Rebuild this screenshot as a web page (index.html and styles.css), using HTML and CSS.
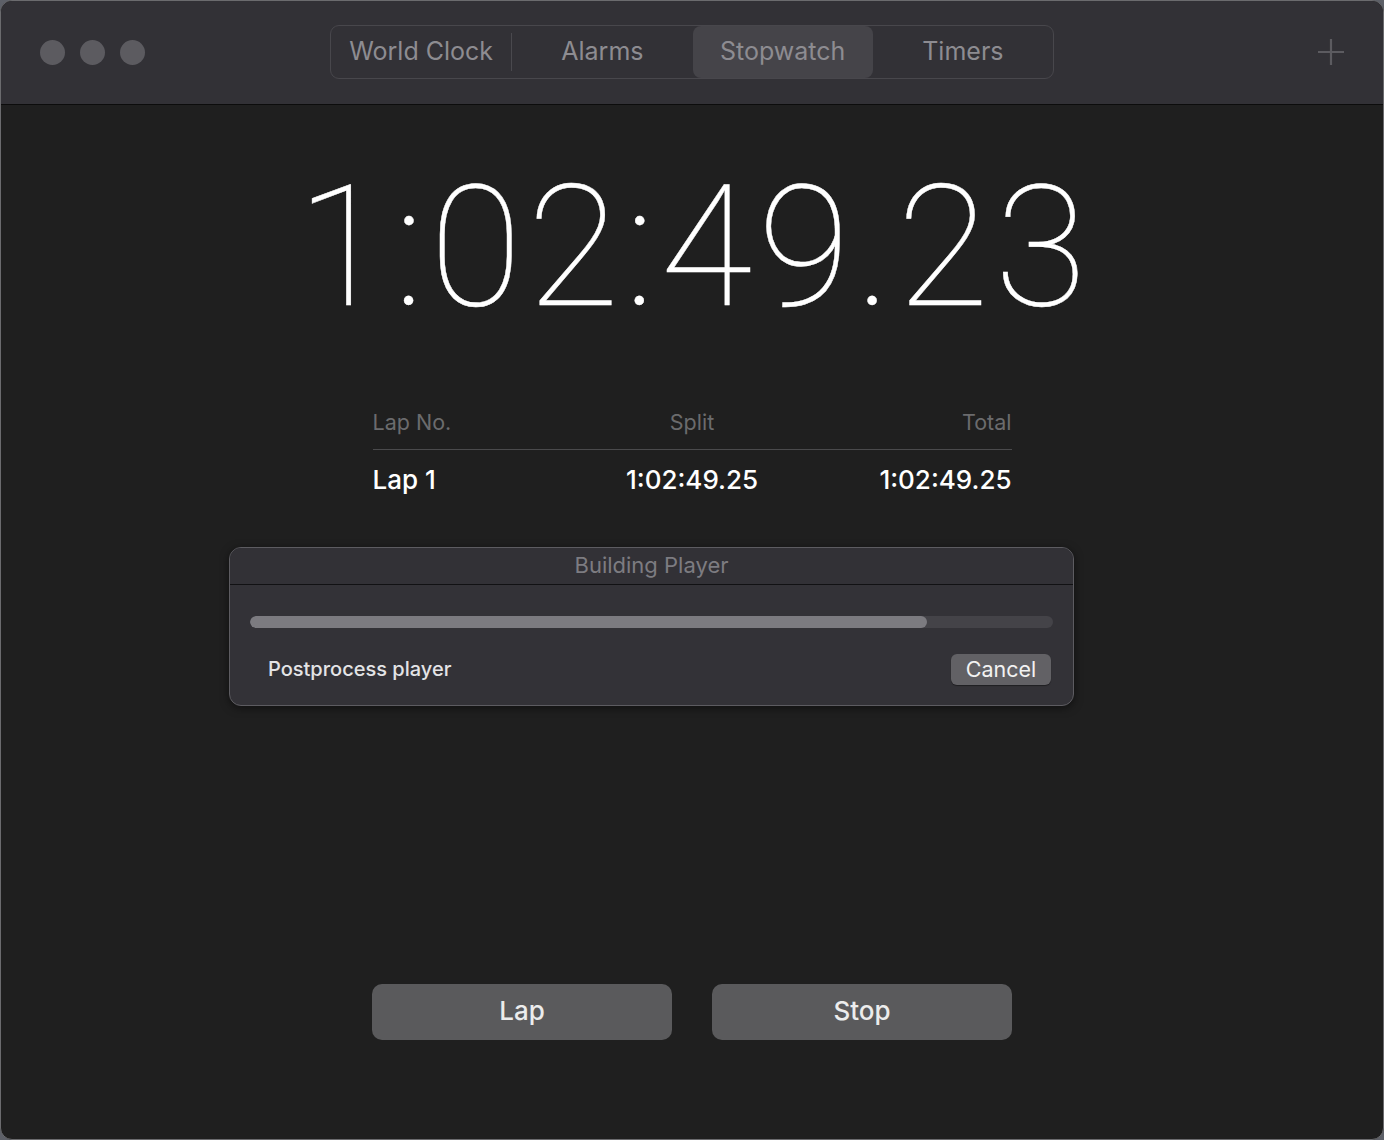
FILE: index.html
```html
<!DOCTYPE html>
<html>
<head>
<meta charset="utf-8">
<link rel="stylesheet" href="styles.css">
</head>
<body>
<div class="window">
  <div class="titlebar">
    <div class="lights">
      <span class="light"></span><span class="light"></span><span class="light"></span>
    </div>
    <div class="segments">
      <div class="seg">World Clock</div>
      <div class="seg-div"></div>
      <div class="seg">Alarms</div>
      <div class="seg selected">Stopwatch</div>
      <div class="seg">Timers</div>
    </div>
    <div class="plus">
      <svg width="30" height="30" viewBox="0 0 30 30"><path d="M15 2V28M2 15H28" stroke="#5c5b60" stroke-width="2.2" fill="none"/></svg>
    </div>
  </div>
  <div class="content">
    <div class="time">1:02:49.23</div>
    <div class="laps">
      <div class="lap-head">
        <span class="c1">Lap No.</span><span class="c2">Split</span><span class="c3">Total</span>
      </div>
      <div class="lap-row">
        <span class="c1">Lap 1</span><span class="c2">1:02:49.25</span><span class="c3">1:02:49.25</span>
      </div>
    </div>
    <div class="dialog">
      <div class="dialog-title">Building Player</div>
      <div class="dialog-body">
        <div class="progress"><div class="fill" style="width:84.3%"></div></div>
        <div class="dialog-row">
          <span class="status">Postprocess player</span>
          <button class="cancel">Cancel</button>
        </div>
      </div>
    </div>
    <div class="spacer"></div>
    <div class="buttons">
      <button class="big">Lap</button>
      <button class="big">Stop</button>
    </div>
  </div>
</div>
</body>
</html>
```

FILE: styles.css
```css
html, body {
  margin: 0;
  padding: 0;
  background: #5d6068;
}
body {
  width: 1384px;
  height: 1140px;
  overflow: hidden;
  font-family: Inter, "Noto Sans", sans-serif;
}
.window {
  box-sizing: border-box;
  width: 1384px;
  height: 1140px;
  border: 1px solid #6b6b6e;
  border-radius: 12px;
  overflow: hidden;
  background: #1f1f1f;
  display: flex;
  flex-direction: column;
}
.titlebar {
  height: 103px;
  flex: none;
  background: #323136;
  border-bottom: 1px solid #0c0c0c;
  display: flex;
  align-items: center;
  position: relative;
}
.lights {
  display: flex;
  gap: 15px;
  padding-left: 39px;
}
.light {
  width: 25px;
  height: 25px;
  border-radius: 50%;
  background: #5c5b60;
}
.segments {
  position: absolute;
  left: 329px;
  top: 24px;
  width: 724px;
  height: 54px;
  box-sizing: border-box;
  border: 1px solid #48474c;
  border-radius: 9px;
  display: flex;
  align-items: center;
}
.seg {
  flex: 1;
  height: 52px;
  display: flex;
  align-items: center;
  justify-content: center;
  color: #8d8c91;
  font-size: 25px;
  border-radius: 8px;
  padding-bottom: 2px;
  box-sizing: border-box;
}
.seg-div {
  width: 1px;
  height: 38px;
  background: #4a494e;
  flex: none;
}
.seg.selected {
  background: #454449;
}
.plus {
  position: absolute;
  right: 37px;
  top: 36px;
  width: 30px;
  height: 30px;
}
.content {
  flex: 1;
  display: flex;
  flex-direction: column;
  align-items: center;
}
.time {
  margin-top: 43px;
  font-family: Roboto, Inter, sans-serif;
  font-size: 168px;
  font-weight: 100;
  color: #ffffff;
  line-height: 200px;
  height: 200px;
  font-variant-numeric: tabular-nums;
  letter-spacing: 5.6px;
  padding-left: 5px;
  -webkit-text-stroke: 0.4px #ffffff;
}
.laps {
  width: 639px;
  margin-top: 54px;
}
.lap-head, .lap-row {
  display: grid;
  grid-template-columns: 1fr 1fr 1fr;
}
.lap-head {
  color: #6b6b6d;
  font-size: 21.5px;
  height: 47px;
  line-height: 40px;
  border-bottom: 1px solid #4a4a4c;
}
.lap-row {
  color: #ffffff;
  font-size: 26px;
  font-weight: 500;
  line-height: 60px;
}
.c1 { text-align: left; }
.c2 { text-align: center; }
.c3 { text-align: right; }
.dialog {
  align-self: flex-start;
  margin-left: 228px;
  margin-top: 37px;
  width: 845px;
  box-sizing: border-box;
  border: 1px solid #5d5c61;
  border-radius: 12px;
  overflow: hidden;
  background: #333237;
  box-shadow: 0 2px 8px rgba(0,0,0,0.5);
}
.dialog-title {
  height: 36px;
  line-height: 34px;
  text-align: center;
  color: #7d7c81;
  font-size: 22px;
  border-bottom: 1px solid #111113;
  background: #323136;
}
.dialog-body {
  padding: 31px 20px 20px 20px;
}
.progress {
  height: 12px;
  border-radius: 6px;
  background: #444348;
  overflow: hidden;
}
.fill {
  height: 100%;
  background: #7c7b80;
  border-radius: 6px;
}
.dialog-row {
  display: flex;
  align-items: center;
  justify-content: space-between;
  margin-top: 26px;
}
.status {
  color: #e4e4e6;
  font-size: 20px;
  font-weight: 500;
  padding-left: 18px;
  padding-bottom: 1px;
}
.cancel {
  font-family: Inter, "Noto Sans", sans-serif;
  width: 100px;
  height: 31px;
  border: none;
  border-radius: 6px;
  background: #626165;
  color: #f2f2f2;
  font-size: 21.5px;
  padding: 0 0 2px 0;
  margin-right: 2px;
  box-shadow: 0 1px 1px rgba(0,0,0,0.4);
}
.spacer {
  flex: 1;
}
.buttons {
  display: flex;
  gap: 40px;
  margin-bottom: 99px;
}
.big {
  font-family: Inter, "Noto Sans", sans-serif;
  width: 300px;
  height: 56px;
  border: none;
  border-radius: 10px;
  background: #5a5a5c;
  color: #ececec;
  font-size: 26px;
  font-weight: 500;
  padding: 0 0 3px 0;
}
```
